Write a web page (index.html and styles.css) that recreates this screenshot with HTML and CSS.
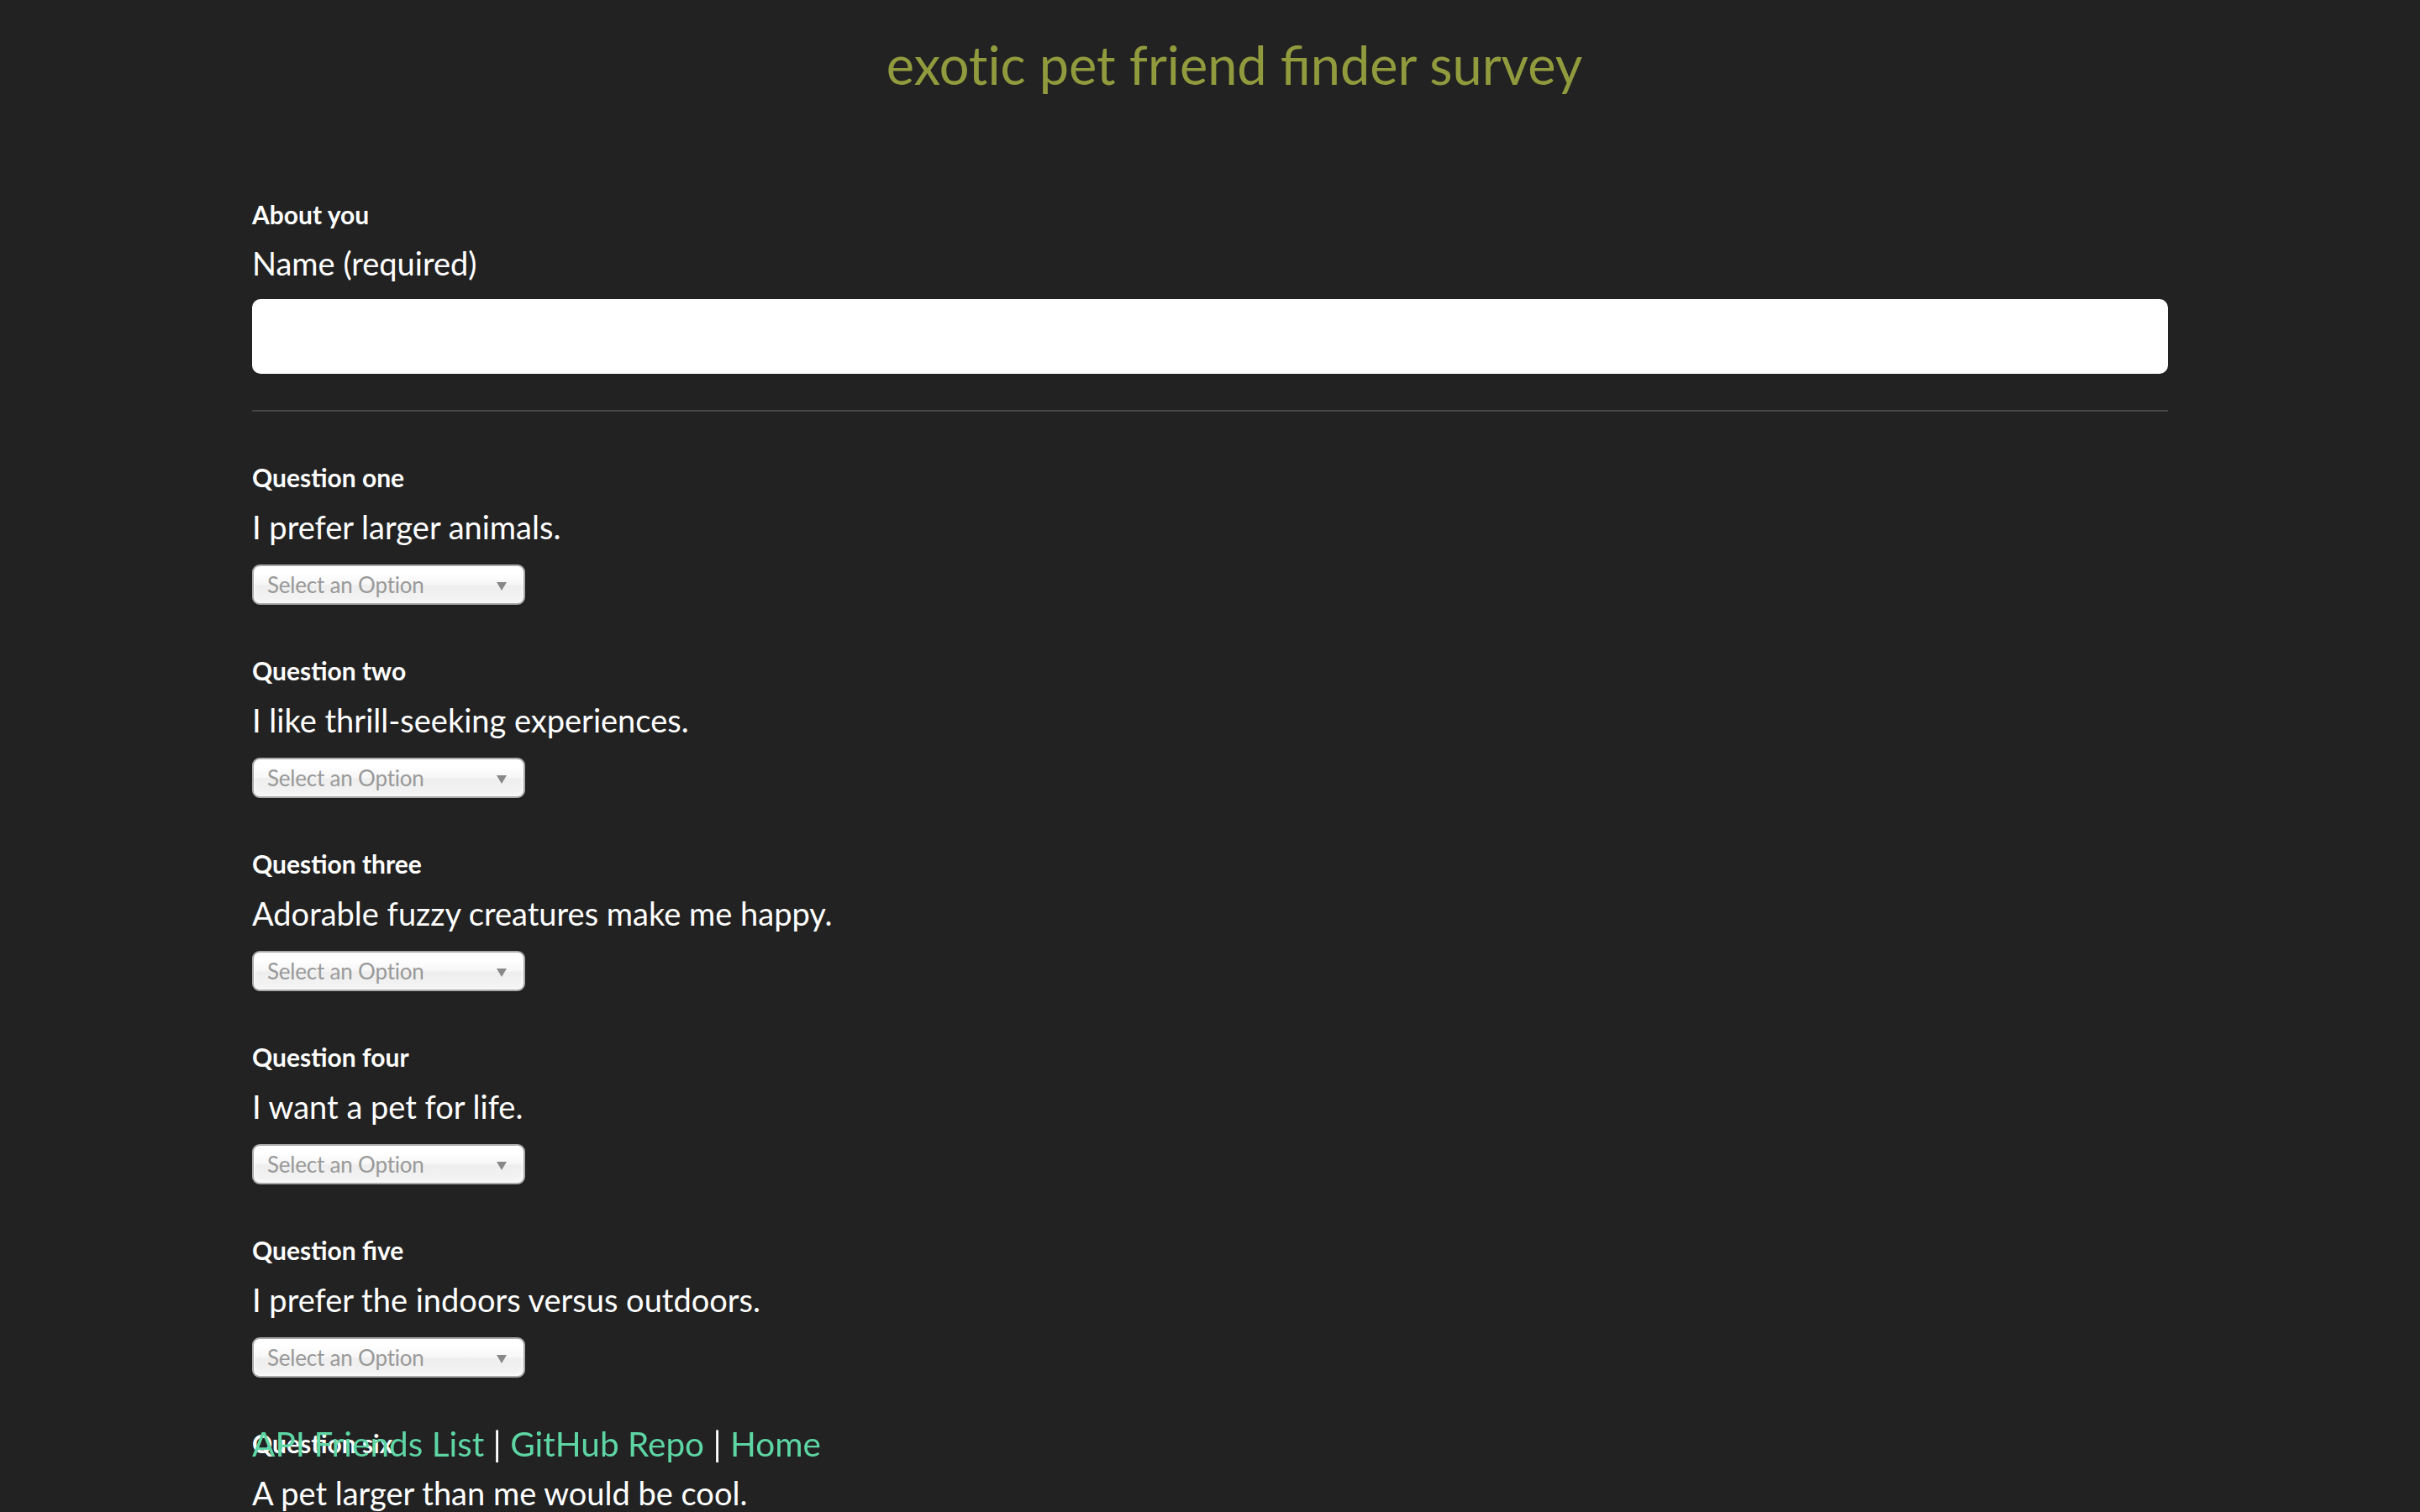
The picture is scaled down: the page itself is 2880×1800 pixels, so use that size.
FILE: index.html
```html
<!DOCTYPE html>
<html lang="en">
<head>
<meta charset="utf-8">
<title>exotic pet friend finder survey</title>
<link rel="stylesheet" href="styles.css">
</head>
<body>
<h1 class="title">exot&zwnj;ic pet friend finder survey</h1>
<main class="container">
  <form class="survey">
    <div class="group about">
      <div class="section-label">About you</div>
      <div class="prompt">Name (required)</div>
      <input class="name-input" type="text">
    </div>
    <hr class="divider">
    <div class="group">
      <div class="section-label">Question one</div>
      <div class="prompt">I prefer larger animals.</div>
      <div class="chosen"><span class="chosen-text">Select an Option</span><b class="chosen-arrow"></b></div>
    </div>
    <div class="group">
      <div class="section-label">Question two</div>
      <div class="prompt">I like thrill-seeking experiences.</div>
      <div class="chosen"><span class="chosen-text">Select an Option</span><b class="chosen-arrow"></b></div>
    </div>
    <div class="group">
      <div class="section-label">Question three</div>
      <div class="prompt">Adorable fuzzy creatures make me happy.</div>
      <div class="chosen"><span class="chosen-text">Select an Option</span><b class="chosen-arrow"></b></div>
    </div>
    <div class="group">
      <div class="section-label">Question four</div>
      <div class="prompt">I want a pet for life.</div>
      <div class="chosen"><span class="chosen-text">Select an Option</span><b class="chosen-arrow"></b></div>
    </div>
    <div class="group">
      <div class="section-label">Question five</div>
      <div class="prompt">I prefer the indoors versus outdoors.</div>
      <div class="chosen"><span class="chosen-text">Select an Option</span><b class="chosen-arrow"></b></div>
    </div>
    <div class="group">
      <div class="section-label">Question six</div>
      <div class="prompt">A pet larger than me would be cool.</div>
    </div>
  </form>
</main>
<footer class="footer">
  <div class="footer-inner">
    <a class="footer-link" href="#">API Friends List</a> <span class="sep">|</span> <a class="footer-link" href="#">GitHub Repo</a> <span class="sep">|</span> <a class="footer-link" href="#">Home</a>
  </div>
</footer>
</body>
</html>
```
FILE: styles.css
```css
html, body {
  margin: 0;
  padding: 0;
  background: #222222;
  color: #ffffff;
  font-family: Lato, "Open Sans", "Liberation Sans", sans-serif;
}

.title {
  margin: 0;
  padding: 39px 0 0 58px;
  font-size: 63px;
  line-height: 76px;
  font-weight: 400;
  text-align: center;
  color: #919b3d;
}

.container {
  width: 2280px;
  margin: 0 auto;
  padding-top: 120px;
  box-sizing: border-box;
}

.survey {
  display: flex;
  flex-direction: column;
}

.group {
  display: flex;
  flex-direction: column;
  align-items: flex-start;
  padding-bottom: 58px;
}

.group.about {
  padding-bottom: 0;
}

.section-label {
  font-size: 30px;
  line-height: 40px;
  font-weight: 700;
}

.prompt {
  margin-top: 15px;
  font-size: 38px;
  line-height: 48px;
  font-weight: 400;
}

.about .prompt {
  margin-top: 14px;
}

.name-input {
  margin-top: 19px;
  width: 100%;
  height: 89px;
  box-sizing: border-box;
  border: none;
  border-radius: 10px;
  background: #ffffff;
  font-size: 30px;
  padding: 0 24px;
  outline: none;
}

.divider {
  width: 100%;
  margin: 43px 0 58px;
  border: 0;
  border-top: 2px solid #464545;
  height: 0;
}

.chosen {
  margin-top: 21px;
  position: relative;
  width: 325px;
  height: 48px;
  box-sizing: border-box;
  border: 2px solid #aaaaaa;
  border-radius: 9px;
  background: linear-gradient(#ffffff 20%, #f6f6f6 50%, #eeeeee 52%, #f4f4f4 100%);
  box-shadow: inset 0 0 6px #ffffff, 0 2px 2px rgba(0, 0, 0, 0.1);
  display: flex;
  align-items: center;
  padding-left: 16px;
}

.chosen-text {
  font-size: 26px;
  line-height: 44px;
  color: #999999;
  letter-spacing: -0.2px;
}

.chosen-arrow {
  position: absolute;
  right: 20px;
  top: 19px;
  width: 0;
  height: 0;
  border-left: 6px solid transparent;
  border-right: 6px solid transparent;
  border-top: 10px solid #888888;
}

.footer {
  position: fixed;
  left: 0;
  right: 0;
  bottom: 57px;
}

.footer-inner {
  width: 2280px;
  margin: 0 auto;
  font-size: 40.5px;
  line-height: 48px;
  color: #ffffff;
}

.footer-link {
  color: #5dd6a4;
  text-decoration: none;
}
```
